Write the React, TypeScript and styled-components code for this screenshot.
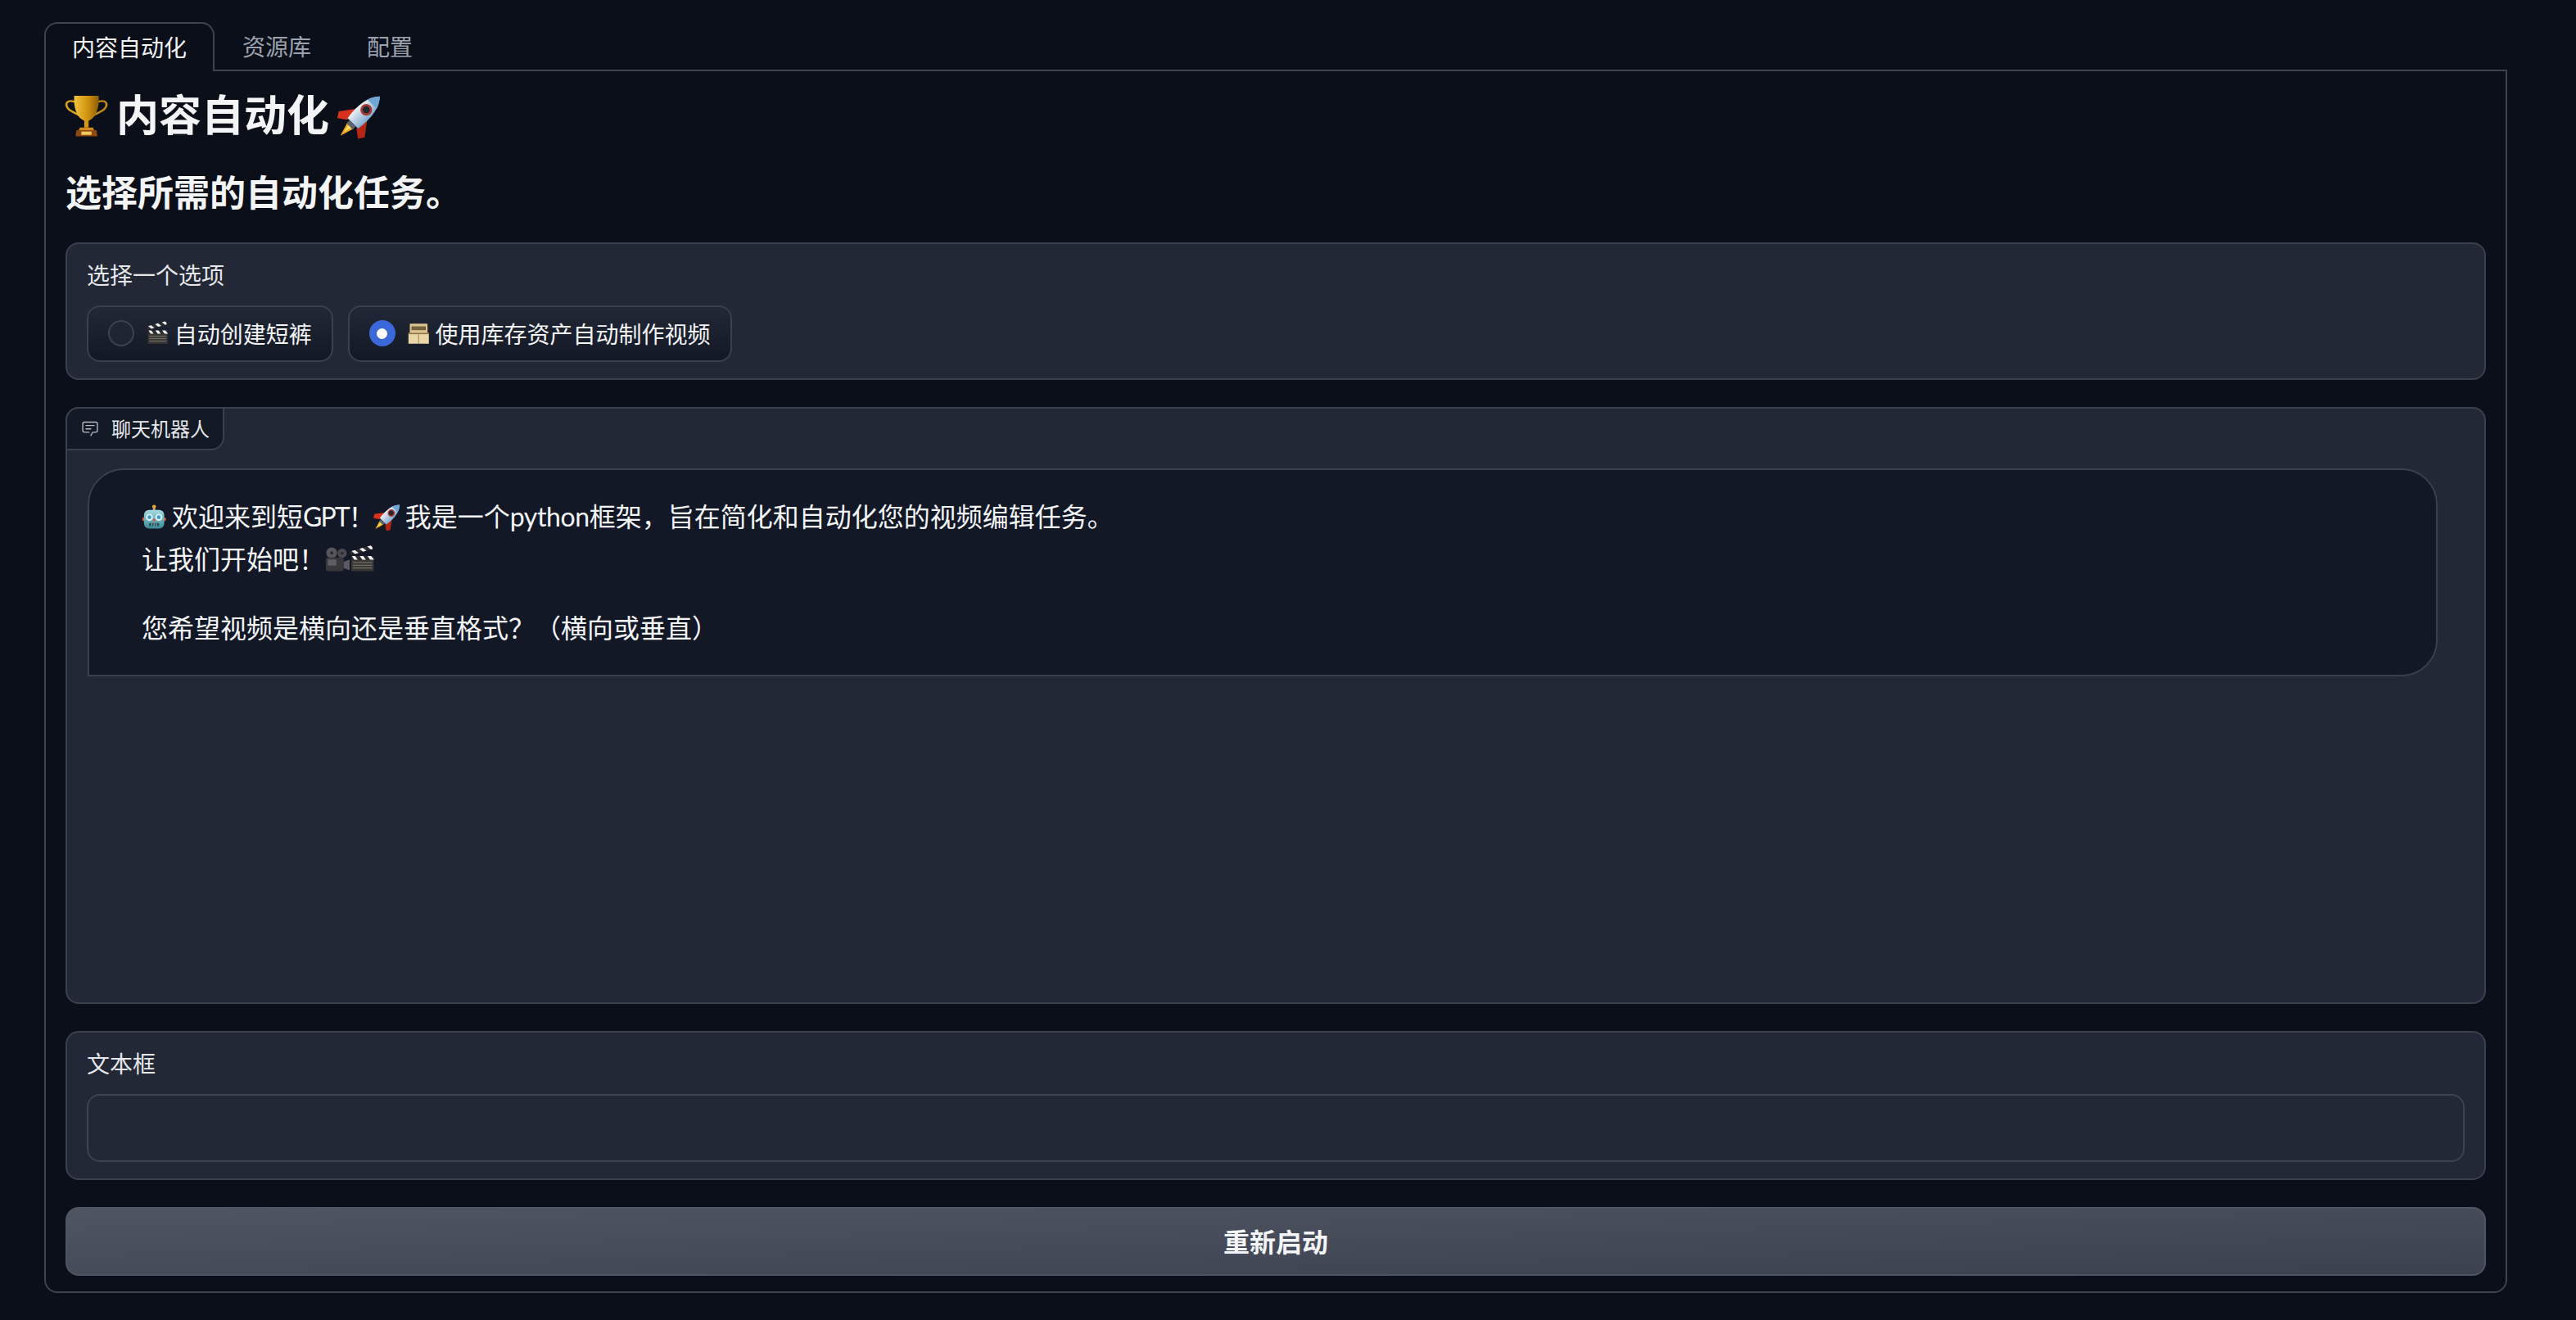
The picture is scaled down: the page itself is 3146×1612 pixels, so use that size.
import React from 'react';
import styled, { createGlobalStyle } from 'styled-components';

const GlobalStyle = createGlobalStyle`
  html, body {
    margin: 0;
    background: #0b0f19;
  }
  * {
    box-sizing: border-box;
  }
  body {
    font-family: Lato, "Noto Sans CJK SC", "Noto Sans", sans-serif;
    color: #f3f4f6;
    overflow: hidden;
  }
`;

const Page = styled.div`
  width: 3146px;
  height: 1612px;
  padding: 27px 84px 33px 54px;
  background: #0b0f19;
`;

const TabNav = styled.nav`
  display: flex;
  height: 58px;
`;

const Tab = styled.button<{ $active?: boolean }>`
  position: relative;
  z-index: 1;
  height: ${(props) => (props.$active ? '60px' : '58px')};
  padding: 0 32px 2px;
  font: inherit;
  font-size: 28px;
  background: ${(props) => (props.$active ? '#0b0f19' : 'transparent')};
  color: ${(props) => (props.$active ? '#f3f4f6' : '#9ca3af')};
  border: 2px solid ${(props) => (props.$active ? '#3d4350' : 'transparent')};
  border-bottom: none;
  border-radius: 16px 16px 0 0;
`;

const TabPanel = styled.main`
  display: flex;
  flex-direction: column;
  height: 1494px;
  padding: 21px 24px 19px;
  border: 2px solid #3d4350;
  border-radius: 0 0 16px 16px;
`;

const Title = styled.h1`
  margin: 0 0 36px;
  font-size: 52px;
  line-height: 64px;
  font-weight: 700;
`;

const Subtitle = styled.h2`
  margin: 0 0 32px;
  font-size: 44px;
  line-height: 55px;
  font-weight: 700;
  padding-bottom: 1px;
`;

const Block = styled.section`
  margin-bottom: 33px;
  padding: 19px 24px 20px;
  background: #222835;
  border: 2px solid #3a404d;
  border-radius: 16px;
`;

const BlockLabel = styled.div`
  margin-bottom: 16px;
  font-size: 28px;
  line-height: 39px;
  padding-bottom: 1px;
  color: #e5e7eb;
`;

const RadioRow = styled.div`
  display: flex;
  gap: 18px;
`;

const RadioOption = styled.label`
  display: flex;
  align-items: center;
  height: 69px;
  padding: 0 24px 1px;
  font-size: 28px;
  white-space: pre;
  background: linear-gradient(to bottom, #222836, #131825);
  border: 2px solid #3a404d;
  border-radius: 16px;
`;

const RadioDot = styled.span<{ $checked?: boolean }>`
  display: flex;
  align-items: center;
  justify-content: center;
  width: 32px;
  height: 32px;
  margin-right: 15px;
  border-radius: 50%;
  background: ${(props) => (props.$checked ? '#3b69d9' : '#1f2533')};
  border: 2px solid ${(props) => (props.$checked ? '#3b69d9' : '#3d4350')};
  &::after {
    content: '';
    width: 13px;
    height: 13px;
    border-radius: 50%;
    background: ${(props) => (props.$checked ? '#fff' : 'transparent')};
  }
`;

const ChatBlock = styled.section`
  position: relative;
  height: 729px;
  margin-bottom: 33px;
  padding: 73px 57px 0 25px;
  background: #222835;
  border: 2px solid #3a404d;
  border-radius: 16px;
`;

const ChatTag = styled.div`
  position: absolute;
  top: -2px;
  left: -2px;
  display: flex;
  align-items: center;
  gap: 15px;
  width: 194px;
  height: 53px;
  padding: 0 0 2px 17px;
  font-size: 24px;
  color: #e5e7eb;
  background: #141926;
  border: 2px solid #3a404d;
  border-radius: 16px 0 16px 0;
`;

const ChatIcon = styled.svg`
  width: 22px;
  height: 22px;
  fill: #b4b9c2;
  flex-shrink: 0;
`;

const Bubble = styled.div`
  height: 254px;
  padding: 31px 64px;
  font-size: 32px;
  line-height: 52px;
  word-spacing: -1.5px;
  background: #121826;
  border: 2px solid #3a404d;
  border-radius: 44px 44px 44px 0;
  p {
    margin: 0 0 32px;
  }
`;

const LatinRun = styled.span<{ $tight: number }>`
  letter-spacing: ${(props) => props.$tight}px;
`;

const TextInput = styled.div`
  height: 83px;
  background: #222835;
  border: 2px solid #3d4350;
  border-radius: 16px;
`;

const RestartButton = styled.button`
  height: 84px;
  padding: 0 0 3px;
  font: inherit;
  font-size: 32px;
  font-weight: 700;
  color: #f3f4f6;
  background: linear-gradient(to bottom right, #4f5563, #3b414e);
  border: 2px solid #4f5562;
  border-radius: 16px;
`;

const EmojiSvg = styled.svg`
  display: inline-block;
  width: 0.95em;
  height: 0.95em;
  vertical-align: -0.12em;
  overflow: visible;
`;

const Trophy = () => (
  <EmojiSvg viewBox="3 3 56 60" preserveAspectRatio="none">
    <defs>
      <linearGradient id="gold" x1="0" x2="1" y1="0" y2="0">
        <stop offset="0" stopColor="#f2c23e" />
        <stop offset="0.55" stopColor="#d1930f" />
        <stop offset="1" stopColor="#8f5c0a" />
      </linearGradient>
    </defs>
    <path d="M16 12C5 8 2 15 6 21c3 5 11 7 16 11" fill="none" stroke="#d9a122" strokeWidth="3" />
    <path d="M48 12c11-4 14 3 10 9-3 5-11 7-16 11" fill="none" stroke="#c48a16" strokeWidth="3" />
    <path d="M15 3h34c1 19-4 33-14 37v10h-6V40C19 36 14 22 15 3Z" fill="url(#gold)" />
    <path d="M23 50h18l2 5H21Z" fill="#d28a1a" />
    <path d="M18 54h28l1 9H17Z" fill="#8c4a12" />
    <rect x="25" y="56" width="14" height="5" fill="#f0c860" />
  </EmojiSvg>
);

const Rocket = () => (
  <EmojiSvg viewBox="0 0 64 64">
    <defs>
      <linearGradient id="hull" x1="0" x2="1" y1="0" y2="0">
        <stop offset="0" stopColor="#f0f2f5" />
        <stop offset="1" stopColor="#7fa9cf" />
      </linearGradient>
    </defs>
    <g transform="rotate(45 32 32) translate(32 32) scale(1.16) translate(-32 -32)">
      <path d="M26 50l6 20 6-20Z" fill="#f2a81d" />
      <path d="M29 50l3 13 3-13Z" fill="#fbe36a" />
      <path d="M22 28 7 48l5 8 11-8Z" fill="#d8321f" />
      <path d="M42 28l15 20-5 8-11-8Z" fill="#b52516" />
      <path d="M32-6c10 10 14 28 10 52H22C18 22 22 4 32-6Z" fill="url(#hull)" />
      <path d="M32-6c4 4 7 9 9 15H23c2-6 5-11 9-15Z" fill="#6fa6d6" />
      <circle cx="32" cy="20" r="8" fill="#a93a34" />
      <circle cx="32" cy="20" r="5" fill="#26262e" />
      <rect x="26" y="46" width="12" height="6" fill="#5c636e" />
    </g>
  </EmojiSvg>
);

const Clapper = () => (
  <EmojiSvg viewBox="0 0 64 64">
    <g transform="rotate(-16 4 22)">
      <rect x="4" y="11" width="58" height="10" fill="#2e2e31" />
      <path d="M8 11h9l7 10h-9Zm21 0h9l7 10h-9Zm21 0h9l3 4v6h-5Z" fill="#f4f4f4" />
    </g>
    <rect x="4" y="23" width="58" height="10" fill="#2e2e31" />
    <path d="M6 23h8l7 10h-9Zm20 0h9l7 10h-9Zm20 0h9l7 8v2h-9Z" fill="#f4f4f4" />
    <rect x="4" y="33" width="58" height="29" fill="#3a3836" />
    <path d="M8 40h50M8 47h50M8 54h50" stroke="#8a8478" strokeWidth="1.8" />
  </EmojiSvg>
);

const FileBox = () => (
  <EmojiSvg viewBox="0 0 64 64">
    <rect x="6" y="3" width="52" height="28" rx="2" fill="#dcc48f" />
    <rect x="11" y="11" width="42" height="11" fill="#6e5a3c" />
    <path d="M16 16.5h32" stroke="#a89268" strokeWidth="2" strokeDasharray="2 2" />
    <path d="M2 30h60v32H2Z" fill="#ead6a6" />
    <path d="M2 30h60v4H2Z" fill="#8e7448" />
    <path d="M32 34v28" stroke="#a88d5e" strokeWidth="2.5" />
  </EmojiSvg>
);

const Robot = () => (
  <EmojiSvg viewBox="0 0 64 64">
    <defs>
      <linearGradient id="tin" x1="0" x2="0" y1="0" y2="1">
        <stop offset="0" stopColor="#a4dbe0" />
        <stop offset="1" stopColor="#3b8a97" />
      </linearGradient>
    </defs>
    <rect x="29" y="6" width="6" height="10" fill="#a8a8a8" />
    <circle cx="32" cy="6" r="5" fill="#e8a33a" />
    <circle cx="6" cy="38" r="5" fill="#d5583f" />
    <circle cx="58" cy="38" r="5" fill="#d5583f" />
    <rect x="6" y="14" width="52" height="48" rx="13" fill="url(#tin)" />
    <circle cx="20" cy="33" r="9" fill="#dff3f5" />
    <circle cx="44" cy="33" r="9" fill="#dff3f5" />
    <circle cx="20" cy="33" r="5" fill="#3d9cc0" />
    <circle cx="44" cy="33" r="5" fill="#3d9cc0" />
    <rect x="29" y="37" width="6" height="6" rx="2" fill="#d5583f" />
    <rect x="19" y="48" width="26" height="8" rx="2" fill="#24505a" />
    <path d="M26 48v8M32 48v8M38 48v8" stroke="#9cd0d6" strokeWidth="1.6" />
  </EmojiSvg>
);

const MovieCamera = () => (
  <EmojiSvg viewBox="0 0 64 64">
    <circle cx="17" cy="15" r="14" fill="#56565c" />
    <circle cx="44" cy="16" r="12" fill="#4a4a50" />
    <circle cx="17" cy="15" r="4" fill="#26262a" />
    <circle cx="44" cy="16" r="3.5" fill="#26262a" />
    <rect x="2" y="27" width="46" height="35" rx="6" fill="#38383d" />
    <rect x="7" y="32" width="22" height="16" rx="3" fill="#5e5e64" />
    <path d="M48 38l15-6v28l-15-6Z" fill="#5a5a60" />
  </EmojiSvg>
);

const App = () => {
  return (
    <Page>
      <GlobalStyle />
      <TabNav>
        <Tab $active>内容自动化</Tab>
        <Tab>资源库</Tab>
        <Tab>配置</Tab>
      </TabNav>
      <TabPanel>
        <Title>
          <Trophy /> 内容自动化 <Rocket />
        </Title>
        <Subtitle>选择所需的自动化任务。</Subtitle>
        <Block>
          <BlockLabel>选择一个选项</BlockLabel>
          <RadioRow>
            <RadioOption>
              <RadioDot />
              <Clapper /> 自动创建短裤
            </RadioOption>
            <RadioOption>
              <RadioDot $checked />
              <FileBox /> 使用库存资产自动制作视频
            </RadioOption>
          </RadioRow>
        </Block>
        <ChatBlock>
          <ChatTag>
            <ChatIcon viewBox="0 0 32 32">
              <path d="M17.74 30 16 29l4-7h6a2 2 0 0 0 2-2V8a2 2 0 0 0-2-2H6a2 2 0 0 0-2 2v12a2 2 0 0 0 2 2h9v2H6a4 4 0 0 1-4-4V8a4 4 0 0 1 4-4h20a4 4 0 0 1 4 4v12a4 4 0 0 1-4 4h-4.84Z" />
              <path d="M8 10h16v2H8zm0 6h10v2H8z" />
            </ChatIcon>
            聊天机器人
          </ChatTag>
          <Bubble>
            <p>
              <Robot /> 欢迎来到短<LatinRun $tight={-2}>GPT</LatinRun>！<Rocket /> 我是一个<LatinRun $tight={-0.4}>python</LatinRun>框架，旨在简化和自动化您的视频编辑任务。
              <br />
              让我们开始吧！<MovieCamera />
              <Clapper />
            </p>
            <p>您希望视频是横向还是垂直格式？（横向或垂直）</p>
          </Bubble>
        </ChatBlock>
        <Block>
          <BlockLabel>文本框</BlockLabel>
          <TextInput />
        </Block>
        <RestartButton>重新启动</RestartButton>
      </TabPanel>
    </Page>
  );
};

export default App;
